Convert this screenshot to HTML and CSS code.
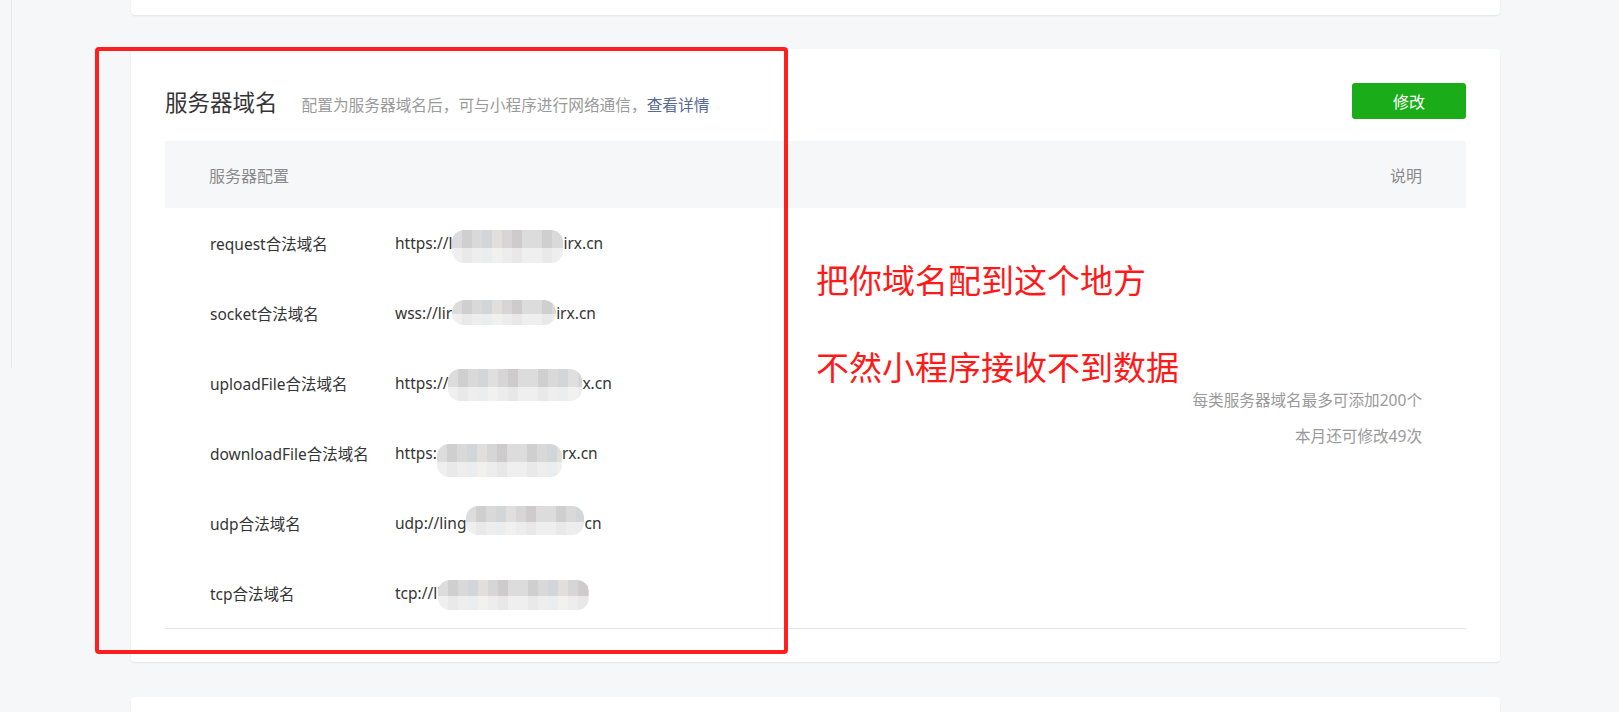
FILE: index.html
```html
<!DOCTYPE html>
<html lang="zh-CN">
<head>
<meta charset="utf-8">
<title>服务器域名</title>
<link rel="stylesheet" href="styles.css">
</head>
<body>
<div class="page">
  <aside class="sidebar"></aside>
  <main class="content">
    <div class="card card-top"></div>

    <section class="card card-main">
      <div class="head">
        <div class="head-titles">
          <h2 class="title">服务器域名</h2>
          <span class="subtitle">配置为服务器域名后，可与小程序进行网络通信，<a class="link" href="#">查看详情</a></span>
        </div>
        <button class="btn">修改</button>
      </div>

      <div class="table">
        <div class="thead">
          <div class="th th-left">服务器配置</div>
          <div class="th th-right">说明</div>
        </div>
        <div class="tbody">
          <div class="cell-left">
            <div class="item"><span class="label">request合法域名</span><span class="value">https://l<span class="mosaic m1"></span>irx.cn</span></div>
            <div class="item"><span class="label">socket合法域名</span><span class="value">wss://lir<span class="mosaic m2"></span>irx.cn</span></div>
            <div class="item"><span class="label">uploadFile合法域名</span><span class="value">https://<span class="mosaic m3"></span>x.cn</span></div>
            <div class="item"><span class="label">downloadFile合法域名</span><span class="value">https:<span class="mosaic m4"></span>rx.cn</span></div>
            <div class="item"><span class="label">udp合法域名</span><span class="value">udp://ling<span class="mosaic m5"></span>cn</span></div>
            <div class="item"><span class="label">tcp合法域名</span><span class="value">tcp://li<span class="mosaic m6"></span></span></div>
          </div>
          <div class="cell-right">
            <p class="note">每类服务器域名最多可添加200个</p>
            <p class="note">本月还可修改49次</p>
          </div>
        </div>
      </div>
    </section>

    <div class="card card-next"></div>
  </main>
</div>

<div class="annot-box"></div>
<div class="annot-text annot-1">把你域名配到这个地方</div>
<div class="annot-text annot-2">不然小程序接收不到数据</div>
</body>
</html>
```

FILE: styles.css
```css
* { box-sizing: border-box; }
html, body {
  margin: 0;
  padding: 0;
  background: #f6f7f9;
  font-family: "Noto Sans", "Noto Sans CJK SC", sans-serif;
  color: #353535;
}
.page {
  display: flex;
  align-items: flex-start;
  height: 712px;
  overflow: hidden;
}
.sidebar {
  width: 12px;
  height: 368px;
  border-right: 1px solid #e4e6eb;
  flex: none;
}
.content {
  margin-left: 119px;
  width: 1369px;
  display: flex;
  flex-direction: column;
  flex: none;
}
.card {
  background: #fff;
  border-radius: 4px;
  box-shadow: 0 1px 2px rgba(0,0,0,0.08);
}
.card-top {
  height: 15px;
  border-radius: 0 0 4px 4px;
}
.card-main {
  margin-top: 34px;
  padding: 34px 34px 33px;
  height: 613px;
}
.card-next {
  margin-top: 35px;
  height: 40px;
}
.head {
  display: flex;
  align-items: center;
  justify-content: space-between;
  height: 36px;
}
.head-titles {
  display: flex;
  align-items: baseline;
}
.title {
  margin: 0;
  font-size: 22.5px;
  font-weight: 400;
  color: #353535;
}
.subtitle {
  margin-left: 24px;
  font-size: 15.7px;
  color: #9a9a9a;
}
.link {
  color: #576b95;
  text-decoration: none;
}
.btn {
  width: 114px;
  height: 36px;
  border: 0;
  border-radius: 3px;
  background: #1aad19;
  color: #fff;
  font-family: "Noto Sans", "Noto Sans CJK SC", sans-serif;
  font-size: 16px;
  padding: 0;
}
.table {
  margin-top: 22px;
  border-bottom: 1px solid #e4e6eb;
}
.thead {
  display: flex;
  justify-content: space-between;
  align-items: center;
  height: 67px;
  background: #f6f7f9;
  padding: 0 44px;
  font-size: 16px;
  color: #8a8a8a;
}
.tbody {
  display: flex;
  justify-content: space-between;
  align-items: center;
}
.cell-left {
  display: flex;
  flex-direction: column;
  padding-left: 45px;
}
.item {
  height: 70px;
  display: flex;
  align-items: center;
  font-size: 15.5px;
  color: #353535;
}
.label {
  width: 185px;
  flex: none;
}
.value {
  white-space: nowrap;
}
/* pixelated blur over the hidden part of the domain; zero-height margin box so it never moves the text */
.mosaic {
  display: inline-block;
  vertical-align: baseline;
  border-radius: 12px;
  background:
    linear-gradient(to bottom, rgba(255,255,255,0) 55%, rgba(255,255,255,0.55) 55%),
    repeating-linear-gradient(to right,
      #dcdcdc 0 10px, #cfcfcf 10px 20px, #d9d9d9 20px 30px, #d3d6d9 30px 40px,
      #e0dfdd 40px 50px, #d6d6d6 50px 60px, #cdcbcc 60px 70px, #dcdcdc 70px 80px);
}
.m1 { width: 111px; height: 33px; margin: -19px 0 -14px; }
.m2 { width: 104px; height: 25px; margin: -19px 0 -6px; }
.m3 { width: 134px; height: 32px; margin: -20px 0 -12px; }
.m4 { width: 125px; height: 33px; margin: -15px 0 -18px; }
.m5 { width: 118px; height: 29px; margin: -23px 0 -6px; }
.m6 { width: 151px; height: 30px; margin: -19px 0 -11px -3px; }
.cell-right {
  padding-right: 44px;
  text-align: right;
}
.note {
  margin: 0;
  font-size: 15.6px;
  line-height: 36px;
  color: #9a9a9a;
}
.annot-box {
  position: absolute;
  left: 95px;
  top: 47px;
  width: 693px;
  height: 607px;
  border: 4px solid #ff1f1f;
  border-radius: 4px;
}
.annot-text {
  position: absolute;
  left: 816px;
  color: #ff1a1a;
  line-height: 1;
  font-family: "Noto Sans CJK SC", sans-serif;
  font-size: 33px;
  white-space: nowrap;
}
.annot-1 { top: 263px; }
.annot-2 { top: 350px; }
```
